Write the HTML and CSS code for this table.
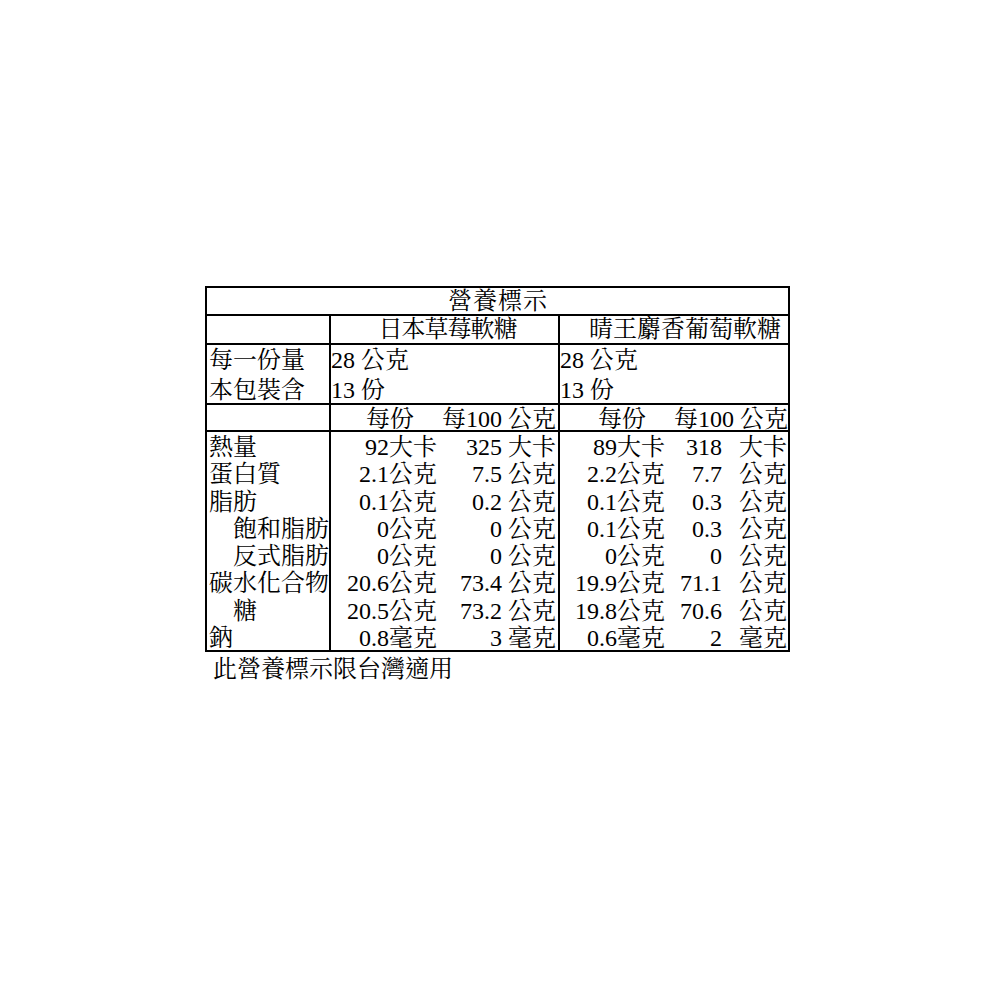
FILE: index.html
```html
<!DOCTYPE html>
<html lang="zh-Hant">
<head>
<meta charset="utf-8">
<title>營養標示</title>
<link rel="stylesheet" href="styles.css">
</head>
<body>
<div class="page">
  <div class="nut">
    <div class="cell title span3">營養標示</div>

    <div class="cell"></div>
    <div class="cell prod p1">日本草莓軟糖</div>
    <div class="cell prod p2 last">晴王麝香葡萄軟糖</div>

    <div class="cell lab2">每一份量<br>本包裝含</div>
    <div class="cell info">28 公克<br>13 份</div>
    <div class="cell info last">28 公克<br>13 份</div>

    <div class="cell"></div>
    <div class="cell hdr"><span>每份</span><span>每100 公克</span></div>
    <div class="cell hdr h2 last"><span>每份</span><span>每100 公克</span></div>

    <div class="row">
      <div class="lab">熱量</div>
      <div class="c2"><span class="a">92大卡</span><span class="b">325 大卡</span></div>
      <div class="c3"><span class="a">89大卡</span><span class="n">318</span><span class="u">大卡</span></div>
    </div>
    <div class="row">
      <div class="lab">蛋白質</div>
      <div class="c2"><span class="a">2.1公克</span><span class="b">7.5 公克</span></div>
      <div class="c3"><span class="a">2.2公克</span><span class="n">7.7</span><span class="u">公克</span></div>
    </div>
    <div class="row">
      <div class="lab">脂肪</div>
      <div class="c2"><span class="a">0.1公克</span><span class="b">0.2 公克</span></div>
      <div class="c3"><span class="a">0.1公克</span><span class="n">0.3</span><span class="u">公克</span></div>
    </div>
    <div class="row">
      <div class="lab ind">飽和脂肪</div>
      <div class="c2"><span class="a">0公克</span><span class="b">0 公克</span></div>
      <div class="c3"><span class="a">0.1公克</span><span class="n">0.3</span><span class="u">公克</span></div>
    </div>
    <div class="row">
      <div class="lab ind">反式脂肪</div>
      <div class="c2"><span class="a">0公克</span><span class="b">0 公克</span></div>
      <div class="c3"><span class="a">0公克</span><span class="n">0</span><span class="u">公克</span></div>
    </div>
    <div class="row">
      <div class="lab">碳水化合物</div>
      <div class="c2"><span class="a">20.6公克</span><span class="b">73.4 公克</span></div>
      <div class="c3"><span class="a">19.9公克</span><span class="n">71.1</span><span class="u">公克</span></div>
    </div>
    <div class="row">
      <div class="lab ind">糖</div>
      <div class="c2"><span class="a">20.5公克</span><span class="b">73.2 公克</span></div>
      <div class="c3"><span class="a">19.8公克</span><span class="n">70.6</span><span class="u">公克</span></div>
    </div>
    <div class="row">
      <div class="lab">鈉</div>
      <div class="c2"><span class="a">0.8毫克</span><span class="b">3 毫克</span></div>
      <div class="c3"><span class="a">0.6毫克</span><span class="n">2</span><span class="u">毫克</span></div>
    </div>
  </div>
  <p class="note">此營養標示限台灣適用</p>
</div>
</body>
</html>
```

FILE: styles.css
```css
* { box-sizing: border-box; }
html, body { margin: 0; padding: 0; background: #fff; }
body {
  font-family: "Liberation Serif", "Noto Serif CJK TC", "Noto Sans CJK TC", serif;
  color: #000;
  font-size: 24px;
}
.page {
  padding: 286px 0 0 205px;
}
.nut {
  display: grid;
  grid-template-columns: 124px 229px 228px;
  grid-template-rows: 28px 29px 60px 27px;
  grid-auto-rows: 27.25px;
  width: 585px;
  border: 2px solid #000;
}
.cell {
  border-right: 2px solid #000;
  border-bottom: 2px solid #000;
  white-space: nowrap;
  line-height: 26px;
}
.cell.last { border-right: none; }
.span3 { grid-column: 1 / 4; border-right: none; }
.title {
  text-align: center;
  letter-spacing: 1px;
  padding-left: 1px;
}
.prod { text-align: center; line-height: 27px; }
.p1 { padding-left: 6px; letter-spacing: -1px; }
.p2 { padding-left: 22px; }
.lab2 { line-height: 30px; padding-left: 2px; }
.info { line-height: 30px; padding-left: 0; }
.hdr {
  display: flex;
  justify-content: flex-end;
  gap: 28px;
  padding-right: 2px;
  padding-top: 2px;
  line-height: 24px;
}
.hdr.h2 { padding-right: 0; }

.row { display: contents; }
.row > div {
  white-space: nowrap;
  line-height: 24.25px;
  padding-top: 3px;
}
.lab {
  border-right: 2px solid #000;
  padding-left: 2px;
}
.lab.ind { padding-left: 26px; }
.c2 {
  border-right: 2px solid #000;
  display: flex;
  padding-right: 2px;
}
.c3 {
  display: flex;
  padding-right: 1px;
}
.c2 .a, .c3 .a { text-align: right; flex: none; }
.c2 .a { width: 106px; }
.c2 .b { flex: 1; text-align: right; }
.c3 .a { width: 105px; }
.c3 .n { width: 57px; text-align: right; flex: none; }
.c3 .u { flex: 1; text-align: right; }
.note {
  margin: 0;
  padding-left: 8px;
  padding-top: 2px;
  line-height: 30px;
}
```
